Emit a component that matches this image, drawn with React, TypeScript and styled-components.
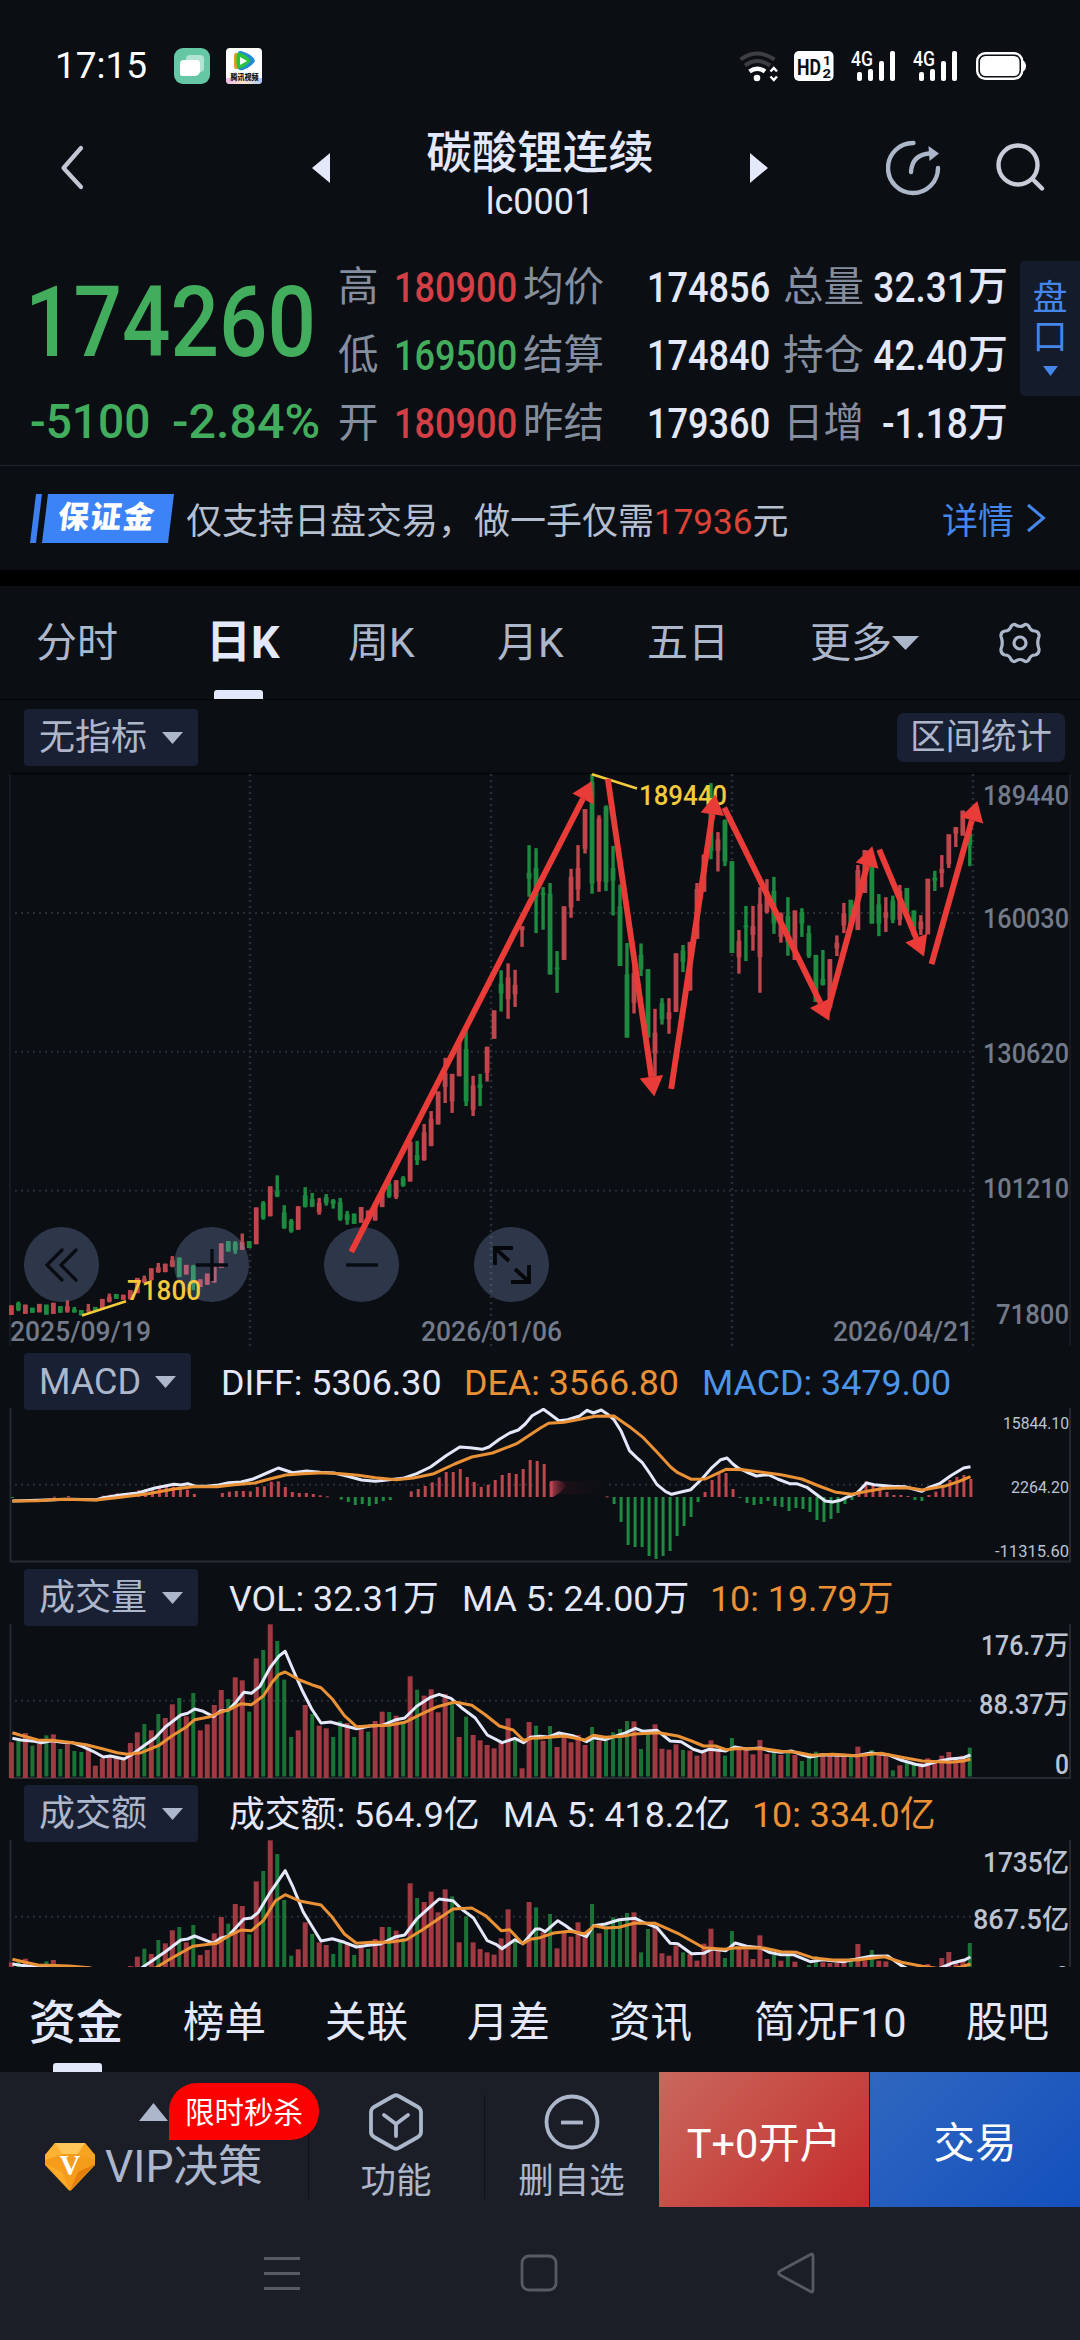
import React from "react";
import styled, { createGlobalStyle, css } from "styled-components";

const C = {
  bg: "#0b0f14",
  bar: "#1b1e26",
  chip: "#192033",
  text: "#e4e8fb",
  soft: "#adb7cc",
  label: "#858e9e",
  axis: "#737a89",
  up: "#bf464d",
  down: "#1d8a40",
  green: "#42ad5d",
  red: "#d33f44",
  orange: "#ea9136",
  blue: "#4486e9",
  yellow: "#f3ca3c",
  arrow: "#e93b38",
  grid: "#292d34",
};
const FONT = `Roboto, "Noto Sans CJK SC", sans-serif`;

const Global = createGlobalStyle`
  html, body { margin: 0; background: ${C.bar}; }
  * { box-sizing: border-box; }
  body { font-family: ${FONT}; color: ${C.text}; -webkit-font-smoothing: antialiased; }
  svg { display: block; flex: none; }
`;

/* ---------- layout pieces ---------- */

const Screen = styled.main`
  width: 1080px;
  height: 2340px;
  overflow: hidden;
  display: flex;
  flex-direction: column;
  background: ${C.bg};
`;

const StatusBar = styled.div`
  height: 96px;
  padding: 36px 54px 0 55px;
  display: flex;
  justify-content: space-between;
`;
const StatusGroup = styled.div`
  height: 60px;
  display: flex;
  align-items: center;
`;
const Clock = styled.span`
  width: 119px;
  font-size: 37px;
  line-height: 60px;
  letter-spacing: 0;
  color: #fff;
`;
const AppIcons = styled.div`
  display: flex;
  gap: 16px;
`;

const Header = styled.header`
  height: 144px;
  padding: 0 36px 0 56px;
  display: grid;
  grid-template-columns: 254px 20px 420px 20px 116px 56px 54px 49px;
  align-items: center;
`;
const Titles = styled.div`
  display: flex;
  flex-direction: column;
  align-items: center;
  padding-top: 17px;
`;
const Title = styled.h1`
  margin: 0;
  font-size: 45.5px;
  font-weight: 500;
  line-height: 52px;
`;
const Code = styled.span`
  font-size: 36px;
  line-height: 45px;
`;

const Quote = styled.section`
  height: 225px;
  display: grid;
  grid-template-columns: 338px 682px 60px;
`;
const Price = styled.div`
  padding: 32px 0 0 25px;
`;
const Squeeze = styled.span<{ $k: number; $right?: boolean }>`
  display: inline-block;
  white-space: nowrap;
  transform: scaleX(${(p) => p.$k});
  transform-origin: ${(p) => (p.$right ? "right" : "left")} center;
`;
const Last = styled.div`
  height: 100px;
  font-size: 99px;
  line-height: 100px;
  font-weight: 500;
  color: ${C.green};
`;
const Change = styled.div`
  height: 56px;
  margin: 22px 0 0 5px;
  display: grid;
  grid-template-columns: 142px 160px;
  font-size: 47.5px;
  line-height: 56px;
  font-weight: 500;
  color: ${C.green};
`;
const Stats = styled.div`
  display: grid;
  grid-template-columns: 56px 129px 124px 136px 88px 137px;
  grid-template-rows: repeat(3, 68px);
  align-items: center;
  padding-top: 13px;
`;
const StatLabel = styled.span`
  font-size: 40.5px;
  line-height: 68px;
  color: ${C.label};
  white-space: nowrap;
`;
const StatValue = styled.span<{ $color?: string; $right?: boolean }>`
  font-size: 43px;
  line-height: 68px;
  font-weight: 500;
  white-space: nowrap;
  color: ${(p) => p.$color ?? C.text};
  display: flex;
  justify-content: ${(p) => (p.$right ? "flex-end" : "flex-start")};
`;
const Unit = styled.span`
  font-size: 40px;
`;
const BookTab = styled.button`
  height: 135px;
  margin-top: 21px;
  padding: 18px 0 0;
  border: 0;
  border-radius: 5px 0 0 5px;
  background: #141b2b;
  color: ${C.blue};
  font-family: ${FONT};
  font-size: 35px;
  line-height: 39px;
  display: flex;
  flex-direction: column;
  align-items: center;
`;

const Notice = styled.section`
  height: 105px;
  border-top: 1px solid #22262e;
  padding: 0 34px 0 30px;
  display: flex;
  align-items: center;
  font-size: 36px;
  color: #b6bfd0;
`;
const Ribbon = styled.div`
  width: 144px;
  height: 49px;
  display: flex;
  gap: 6px;
  padding: 0 3px;
  transform: skewX(-7deg);
`;
const RibbonBar = styled.span`
  width: 6px;
  background: #3b7ff0;
`;
const RibbonBody = styled.span`
  flex: 1;
  background: #3b83f7;
  color: #fff;
  font-size: 31px;
  font-weight: 900;
  line-height: 47px;
  padding-left: 13px;
  letter-spacing: 1.5px;
`;
const NoticeText = styled.span`
  margin-left: 12px;
  flex: 1;
  white-space: nowrap;
`;
const Accent = styled.span`
  color: #dc4338;
  font-size: 35px;
`;
const Detail = styled.a`
  color: ${C.blue};
  display: flex;
  align-items: center;
  gap: 12px;
`;

const Band = styled.div`
  height: 16px;
  background: #000;
`;

const Periods = styled.nav`
  height: 114px;
  padding-left: 36px;
  border-bottom: 1px solid #010203;
  display: grid;
  grid-template-columns: 170px 142px 149px 150px 163px 188px 60px;
`;
const Period = styled.div<{ $active?: boolean }>`
  display: flex;
  flex-direction: column;
  justify-content: flex-end;
  font-size: 41px;
  line-height: 56px;
  color: ${C.soft};
  ${(p) =>
    p.$active &&
    css`
      color: ${C.text};
      font-size: 45px;
      font-weight: 700;
    `}
`;
const PeriodText = styled.span<{ $pad: number }>`
  display: flex;
  align-items: center;
  white-space: nowrap;
  height: 56px;
  margin-bottom: ${(p) => p.$pad}px;
`;
const Underline = styled.i<{ $left: number }>`
  width: 49px;
  height: 9px;
  margin-left: ${(p) => p.$left}px;
  border-radius: 3px 3px 0 0;
  background: ${C.text};
`;

const ToolRow = styled.div`
  height: 73px;
  padding: 9px 15px 8px 24px;
  display: flex;
  align-items: center;
  justify-content: space-between;
`;
const Chip = styled.button<{ $w: number; $h?: number }>`
  width: ${(p) => p.$w}px;
  height: ${(p) => p.$h ?? 57}px;
  flex: none;
  padding: 1px 15px 0 15px;
  border: 0;
  border-radius: 4px;
  background: ${C.chip};
  color: ${C.soft};
  font-family: ${FONT};
  font-size: 36px;
  line-height: 1;
  white-space: nowrap;
  display: flex;
  align-items: center;
  justify-content: space-between;
`;
const Range = styled(Chip)`
  font-size: 35.5px;
  border-radius: 7px;
  justify-content: center;
`;

const LegendRow = styled.div`
  height: 63px;
  padding: 6px 0 0 24px;
  display: flex;
  align-items: center;
  font-size: 35.8px;
`;
const Legend = styled.span<{ $w: number; $color?: string; $ml?: number }>`
  width: ${(p) => p.$w}px;
  height: 57px;
  line-height: 60px;
  margin-left: ${(p) => p.$ml ?? 0}px;
  white-space: nowrap;
  color: ${(p) => p.$color ?? C.text};
`;
const Pane = styled.div`
  margin-top: -2px;
`;
const PriceArea = styled.div`
  position: relative;
  height: 574px;
`;
const Layer = styled.div`
  position: absolute;
  inset: 0;
  pointer-events: none;
`;
const Controls = styled.div`
  position: absolute;
  left: 24px;
  top: 454px;
  display: flex;
  gap: 75px;
`;
const RoundButton = styled.button`
  width: 75px;
  height: 75px;
  padding: 0;
  border: 0;
  border-radius: 50%;
  background: rgba(140, 165, 220, 0.27);
  display: grid;
  place-items: center;
`;

const Sections = styled.nav`
  height: 105px;
  padding-left: 29px;
  display: grid;
  grid-template-columns: 154px 142px 142px 142px 145px 212px 90px;
  font-size: 41.5px;
`;
const Section = styled.div<{ $active?: boolean }>`
  display: flex;
  flex-direction: column;
  padding-top: 28px;
  white-space: nowrap;
  line-height: 56px;
  ${(p) =>
    p.$active &&
    css`
      font-size: 47px;
      font-weight: 500;
    `}
`;
const SectionMark = styled(Underline)`
  margin-top: 12px;
`;

const ActionBar = styled.div`
  height: 135px;
  background: ${C.bar};
  display: grid;
  grid-template-columns: 308px 176px 175px 210px 1px 210px;
`;
const Vip = styled.div`
  position: relative;
  padding: 70px 0 0 44px;
  display: flex;
  align-items: flex-start;
  gap: 9px;
  font-size: 44.5px;
  line-height: 51px;
  color: ${C.soft};
  white-space: nowrap;
`;
const Promo = styled.div`
  position: absolute;
  left: 139px;
  top: 11px;
  display: flex;
  align-items: center;
`;
const PromoTag = styled.span`
  height: 57px;
  width: 150px;
  margin-left: 1px;
  border-radius: 28px 28px 28px 0;
  background: #fb0200;
  color: #fff;
  font-size: 29.5px;
  line-height: 60px;
  text-align: center;
`;
const Action = styled.div`
  padding-top: 21px;
  display: flex;
  flex-direction: column;
  align-items: center;
  gap: 5px;
  font-size: 35.5px;
  line-height: 50px;
  color: ${C.soft};
  background: linear-gradient(#0e1116, #0e1116) 0 23px / 1px 104px no-repeat;
`;
const Trade = styled.button<{ $from: string; $to: string }>`
  border: 0;
  padding: 0;
  background: linear-gradient(135deg, ${(p) => p.$from}, ${(p) => p.$to});
  color: #fff;
  font-family: ${FONT};
  font-size: 41.5px;
`;
const SystemNav = styled.div`
  flex: 1;
  padding: 44px 264px 0 262px;
  background: ${C.bar};
  display: flex;
  align-items: flex-start;
  justify-content: space-between;
`;

/* ---------- small drawings ---------- */

const Caret = ({ w = 21, h = 12, color = C.soft }: { w?: number; h?: number; color?: string }) => (
  <svg width={w} height={h} viewBox="0 0 10 10" preserveAspectRatio="none">
    <path d="M0 0H10L5 10Z" fill={color} />
  </svg>
);

const FilesIcon = () => (
  <svg width="36" height="36" viewBox="0 0 36 36">
    <rect width="36" height="36" rx="9" fill="#66c7a5" />
    <rect x="12" y="7" width="18" height="17" rx="4" fill="#b3e3d2" />
    <path d="M10 12h13a3 3 0 0 1 3 3v8a5 5 0 0 1-5 5H8a2 2 0 0 1-2-2V16a4 4 0 0 1 4-4z" fill="#fff" />
  </svg>
);

const VideoIcon = () => (
  <svg width="36" height="36" viewBox="0 0 36 36">
    <defs>
      <linearGradient id="vbg" x1="0" x2="1">
        <stop offset="0" stopColor="#f0b8ee" />
        <stop offset=".5" stopColor="#fbe6c8" />
        <stop offset="1" stopColor="#a9c9fb" />
      </linearGradient>
    </defs>
    <rect width="36" height="36" rx="4" fill="#fff" />
    <path d="M0 30H36V32a4 4 0 0 1-4 4H4a4 4 0 0 1-4-4Z" fill="url(#vbg)" />
    <path d="M8 7q0-2 2-2h3v16h-3q-2 0-2-2z" fill="#e89a24" />
    <path d="M12 4.500q1-2 4-1.200 8 2.500 12 7.200 1.500 2 0 4-4 5-11 7.500-4 1-5-1.500-2-8 0-16z" fill="#2189d8" />
    <path d="M11 6q1-2 3.500-1.200 6 2.200 9.500 6.200 1 1.500 0 3-3.500 4-9 6.200-3 1-4-1.200-1.500-6.500 0-13z" fill="#28c440" />
    <path d="M14 9l7 4-7 4z" fill="#fff" />
    <text x="4.500" y="31.500" fontSize="7.500" fontWeight="900" fill="#1a1420" textLength="28" lengthAdjust="spacingAndGlyphs">
      腾讯视频
    </text>
  </svg>
);

const Signal = ({ x }: { x: number }) => (
  <g transform={`translate(${x} 0)`} fill="#fff">
    <text x="0" y="14.500" fontSize="19.500" fontWeight="500" textLength="22" lengthAdjust="spacingAndGlyphs">4G</text>
    <rect x="6" y="21" width="5" height="9" rx="2" />
    <rect x="17" y="18" width="5" height="12" rx="2" />
    <rect x="28" y="10" width="5" height="20" rx="2" />
    <rect x="39" y="0" width="5" height="30" rx="2" />
  </g>
);

const StatusIcons = () => (
  <svg width="288" height="42" viewBox="738 -6 288 42" fontFamily={FONT}>
    <g fill="none" strokeWidth="4">
      <path d="M740.500 8.500Q757 -3.500 774.500 8.500" stroke="#3c3e42" />
      <path d="M745 14.500Q757 5.500 770 14.500" stroke="#3c3e42" />
      <path d="M749.500 20.500Q757.500 15 765 20.500" stroke="#fff" strokeWidth="4.500" />
      <path d="M770.500 20.500L773.800 17L777 20.500M770.500 25.500L773.800 29L777 25.500" stroke="#fff" strokeWidth="2.500" />
    </g>
    <circle cx="757" cy="27" r="3.300" fill="#fff" />
    <rect x="794" width="39.500" height="30" rx="5" fill="#fff" />
    <g fill="#0b0f14" fontWeight="700">
      <text x="797" y="23.500" fontSize="22.500" textLength="24" lengthAdjust="spacingAndGlyphs">HD</text>
      <text x="823" y="13.500" fontSize="12.500" textLength="8" lengthAdjust="spacingAndGlyphs">1</text>
      <text x="822.500" y="26.500" fontSize="12.500" textLength="8.500" lengthAdjust="spacingAndGlyphs">2</text>
    </g>
    <Signal x={851} />
    <Signal x={913} />
    <rect x="977.200" y="2.200" width="45" height="25.500" rx="8" fill="none" stroke="#fff" strokeWidth="2.400" />
    <rect x="980" y="5" width="39.500" height="20" rx="5.500" fill="#fff" />
    <path d="M1023 9.500q3 1.500 3 5.500t-3 5.500z" fill="#fff" />
  </svg>
);

/* ---------- chart data ---------- */

const STEP = 6.9956;
const cx = (i: number) => 11.4 + STEP * i;
const UNIT = 2.9037;

type Candle = [string, number, number, number?, number?];
// direction, high, low, body top, body bottom (missing body = full range)
const CANDLES: Candle[] = [
  ["r", 1428, 1453], ["g", 1418, 1443, 1422, 1440], ["r", 1426, 1450], ["g", 1434, 1447], ["r", 1424, 1446], ["g", 1426, 1452],
  ["r", 1421, 1450], ["g", 1430, 1447], ["r", 1415, 1447, 1430, 1444], ["g", 1432, 1447, 1438, 1446], ["g", 1440, 1454], ["r", 1424, 1446, 1439, 1443],
  ["g", 1432, 1442], ["r", 1411, 1437], ["r", 1397, 1420, 1405, 1418], ["g", 1398, 1411], ["r", 1400, 1413], ["r", 1388, 1412],
  ["r", 1356, 1396], ["r", 1350, 1370, 1358, 1368], ["r", 1331, 1362], ["r", 1317, 1343, 1328, 1341], ["r", 1319, 1341], ["r", 1299, 1328, 1310, 1326],
  ["g", 1303, 1354], ["r", 1322, 1347], ["g", 1322, 1388, 1325, 1372], ["r", 1360, 1380], ["r", 1345, 1374], ["r", 1325, 1368],
  ["r", 1266, 1330], ["g", 1260, 1287], ["g", 1260, 1293, 1264, 1284], ["r", 1240, 1283, 1262, 1282], ["g", 1260, 1278], ["r", 1172, 1268],
  ["g", 1155, 1204, 1160, 1200], ["r", 1117, 1195], ["g", 1088, 1145, 1130, 1143], ["g", 1166, 1228, 1185, 1226], ["g", 1202, 1238, 1207, 1234], ["r", 1169, 1230],
  ["g", 1119, 1172, 1140, 1170], ["g", 1134, 1171, 1150, 1170], ["r", 1147, 1191, 1160, 1185], ["g", 1137, 1167, 1145, 1160], ["g", 1150, 1175, 1153, 1162], ["g", 1147, 1207, 1158, 1203],
  ["g", 1181, 1217, 1190, 1205], ["g", 1188, 1215], ["r", 1171, 1212], ["r", 1180, 1200], ["r", 1160, 1206], ["r", 1130, 1171],
  ["g", 1100, 1147, 1110, 1143], ["r", 1101, 1150, 1101, 1145], ["g", 1090, 1118, 1095, 1115], ["r", 1000, 1104], ["g", 998, 1061, 1035, 1048], ["r", 954, 1050, 975, 1048],
  ["r", 920, 1012, 940, 1011], ["r", 869, 955], ["r", 781, 899, 820, 857], ["r", 823, 925, 823, 895], ["r", 742, 829], ["g", 705, 907, 758, 895],
  ["r", 828, 933, 853, 917], ["g", 823, 907, 850, 860], ["r", 752, 843, 752, 820], ["r", 657, 731], ["g", 552, 660, 587, 613], ["r", 534, 679, 571, 628],
  ["r", 551, 648, 590, 615], ["r", 437, 491, 437, 447], ["g", 225, 360, 297, 313], ["g", 233, 455, 285, 360],
  ["g", 335, 446, 350, 355], ["g", 324, 563, 352, 563], ["g", 502, 611, 545, 550], ["r", 385, 525], ["r", 287, 415, 308, 388], ["r", 225, 371, 285, 341],
  ["r", 131, 247, 131, 235], ["g", 39, 352, 60, 325], ["r", 147, 347, 155, 320], ["g", 121, 345, 125, 322], ["g", 227, 409, 285, 318], ["g", 328, 541, 385, 541],
  ["g", 481, 728, 563, 728], ["r", 530, 665, 560, 638], ["g", 482, 567, 512, 550], ["g", 549, 728], ["r", 653, 830, 715, 770], ["g", 625, 694, 638, 680],
  ["r", 625, 718, 662, 680], ["r", 508, 661], ["g", 486, 557, 500, 530], ["r", 478, 605], ["r", 324, 470, 340, 470], ["r", 250, 347],
  ["g", 63, 262, 95, 240], ["r", 191, 294, 210, 240], ["g", 158, 280, 160, 268], ["g", 267, 507], ["r", 447, 561, 475, 518], ["g", 384, 528, 435, 440],
  ["r", 384, 501, 437, 460], ["r", 335, 611, 378, 518], ["r", 314, 404, 345, 400], ["g", 308, 457, 345, 430], ["r", 401, 480, 405, 465], ["g", 361, 514, 410, 480],
  ["r", 396, 525], ["g", 390, 465, 400, 430], ["g", 435, 520, 455, 515], ["g", 512, 635], ["g", 499, 592, 575, 590], ["r", 523, 650],
  ["r", 461, 515, 480, 495], ["r", 376, 455, 403, 435], ["g", 368, 440], ["r", 277, 447, 290, 447], ["r", 238, 350], ["g", 270, 430, 280, 430],
  ["g", 353, 463, 380, 430], ["r", 361, 452, 400, 415], ["g", 357, 429, 370, 420], ["r", 329, 435, 345, 420], ["g", 337, 400], ["g", 396, 460],
  ["r", 408, 460, 425, 445], ["r", 313, 458], ["g", 292, 345, 310, 318], ["r", 251, 335, 287, 298], ["r", 197, 285, 197, 275], ["r", 178, 230, 178, 195],
  ["r", 135, 200], ["g", 190, 280, 195, 225],
];

const VOLUME = [
  430, 426, 402, 440, 434, 409, 406, 450, 430, 456, 459, 445, 500, 478, 470, 472, 476, 432, 400, 375, 394, 345, 357, 316, 297, 352, 282, 394, 376, 318,
  273, 300, 235, 244, 338, 178, 153, 76, 126, 242, 414, 394, 318, 345, 380, 388, 414, 366, 372, 414, 386, 398, 366, 338, 339, 350, 372, 232, 272, 290,
  271, 340, 285, 312, 414, 353, 408, 424, 438, 448, 430, 358, 418, 508, 369, 380, 425, 381, 444, 412, 430, 408, 438, 384, 425, 425, 400, 390, 366, 367,
  450, 400, 376, 449, 452, 436, 453, 455, 470, 460, 424, 455, 470, 417, 450, 452, 466, 423, 465, 455, 468, 458, 468, 486, 474, 458, 470, 468, 470, 470,
  468, 443, 470, 453, 466, 466, 514, 499, 490, 494, 492, 478, 488, 470, 459, 478, 470, 446,
];
const TURNOVER = [
  1090, 1088, 1079, 1100, 1096, 1087, 1083, 1106, 1098, 1110, 1110, 1108, 1150, 1130, 1125, 1125, 1130, 1101, 1073, 1049, 1065, 1023, 1033, 994, 984, 1030, 978, 1068, 1053, 1003,
  954, 974, 915, 921, 1006, 847, 816, 724, 765, 903, 1070, 1051, 970, 1005, 1030, 1038, 1065, 1027, 1030, 1068, 1040, 1050, 1020, 984, 984, 995, 1018, 853, 897, 909,
  878, 940, 871, 892, 1030, 952, 1030, 1050, 1060, 1067, 1018, 931, 1020, 1150, 909, 925, 1000, 945, 1048, 1000, 1013, 970, 1015, 915, 1003, 980, 955, 960, 942, 940,
  1060, 990, 980, 1063, 1070, 1040, 1060, 1065, 1085, 1034, 989, 1050, 1077, 996, 1050, 1052, 1080, 1009, 1080, 1068, 1085, 1070, 1088, 1110, 1098, 1072, 1090, 1092, 1092, 1090,
  1077, 1035, 1085, 1053, 1085, 1087, 1150, 1140, 1120, 1120, 1115, 1095, 1110, 1077, 1059, 1090, 1080, 1032,
];
// colours of the volume and turnover bars follow the close-to-close direction
const DOWN_BARS = new Set([
  1, 3, 5, 7, 9, 10, 19, 21, 24, 26, 31, 34, 36, 38, 39, 40, 43, 46, 47, 49, 51, 54, 56, 58, 63, 65, 72, 75,
  77, 83, 85, 86, 87, 88, 90, 91, 96, 102, 103, 109, 111, 113, 114, 115, 120, 123, 126, 128, 129, 137,
]);

// MACD histogram tips, keyed by the first bar of each run
const MACD_RUNS: [number, number[]][] = [
  [0, [476]], [6, [473]], [8, [471]],
  [13, [470, 467, 463, 462, 460, 454, 451, 447, 444, 444, 443, 446, 452, 465]],
  [30, [462, 458, 456, 456, 457, 444, 442, 428, 427, 444, 459, 462, 462, 465, 469, 472]],
  [47, [482, 489, 498, 495, 501, 495, 486, 483]],
  [57, [457, 450, 441, 430, 415, 399, 399, 390, 414, 429, 444, 437, 423, 408, 402, 405, 390, 363, 366, 375, 427]],
  [85, [472, 495, 549, 618, 624, 624, 651, 660, 651, 636, 591, 561, 534, 489, 459, 423, 404, 402, 450, 477, 492, 498, 495, 486, 501, 504, 516, 507, 510, 519, 543, 549, 540, 522, 495, 483, 453, 427, 441, 444, 459, 468, 468, 471, 483, 486, 468, 458, 438, 423, 414, 408, 420]],
];

const DIFF = "36,486 110,484 200,481 280,482 300,476 350,468 400,462 450,447 505,436 525,438 545,434 565,441 600,442 635,438 665,431 700,429 735,420 775,402 808,387 850,401 890,396 930,400 970,402 1010,412 1050,423 1090,427 1130,422 1170,418 1210,404 1250,384 1295,350 1335,324 1365,326 1400,331 1420,324 1450,301 1480,282 1505,273 1525,255 1545,230 1568,217 1578,211 1593,222 1623,245 1648,242 1683,231 1705,214 1723,222 1746,213 1763,225 1783,242 1803,275 1828,335 1848,355 1865,371 1888,405 1908,437 1933,458 1950,466 1968,461 2006,452 2038,420 2068,385 2093,362 2111,357 2128,375 2143,387 2168,399 2196,411 2218,408 2233,408 2258,420 2293,434 2313,434 2343,445 2368,464 2396,486 2418,489 2440,484 2458,475 2488,463 2516,432 2538,437 2588,442 2628,443 2676,457 2698,445 2728,434 2763,409 2798,387 2818,383";
const DEA = "36,486 110,485 180,481 280,483 350,475 430,464 505,450 560,443 630,443 680,437 740,432 780,421 830,408 880,404 940,401 990,404 1040,409 1090,416 1150,422 1200,417 1260,404 1320,375 1370,354 1430,342 1500,314 1568,268 1593,253 1638,250 1688,240 1728,232 1783,231 1828,263 1868,296 1908,340 1948,385 1968,401 2008,421 2048,420 2108,391 2158,392 2208,399 2268,407 2328,420 2378,441 2428,460 2473,466 2518,457 2568,448 2638,446 2678,453 2748,440 2783,428 2818,413";
const VOL5 = "36,418 60,423 100,427 120,431 150,425 180,430 210,431 240,443 270,457 300,474 320,471 360,480 385,466 420,439 450,417 480,384 525,348 545,343 565,330 590,337 620,353 640,336 662,334 685,310 708,280 730,283 755,262 785,205 810,171 828,157 850,210 880,280 905,330 932,372 960,369 1000,380 1035,389 1075,381 1110,379 1150,362 1175,357 1210,322 1250,295 1275,286 1310,298 1340,326 1380,357 1415,408 1458,431 1495,418 1520,431 1540,415 1568,412 1593,414 1623,402 1663,410 1703,428 1723,416 1758,422 1783,413 1818,401 1845,388 1868,397 1908,394 1946,426 1978,428 2013,451 2038,459 2058,451 2108,456 2133,444 2168,450 2208,447 2233,455 2268,460 2298,456 2328,467 2353,474 2388,467 2438,469 2488,470 2528,462 2578,467 2618,484 2658,496 2680,500 2718,488 2758,480 2798,476 2818,468";
const VOL10 = "36,401 60,409 110,423 150,424 200,430 250,437 300,450 340,461 370,466 410,461 460,440 500,410 540,385 565,362 610,353 640,340 670,330 700,314 730,317 765,290 790,250 810,226 828,219 870,243 905,257 932,266 965,300 1000,350 1035,383 1080,380 1130,379 1175,370 1220,347 1270,323 1320,309 1370,319 1410,348 1450,381 1490,393 1520,424 1545,418 1568,417 1638,411 1698,423 1723,409 1758,415 1808,412 1843,405 1913,401 1968,411 2008,426 2043,441 2078,441 2108,452 2138,449 2218,449 2268,457 2313,460 2358,469 2418,466 2488,470 2558,463 2618,475 2678,486 2758,490 2798,486 2818,480";
const AMT5 = "36,1095 60,1099 100,1103 150,1101 200,1103 270,1110 360,1150 412,1106 440,1087 480,1058 525,1023 545,1020 565,1011 620,1033 640,1018 662,1012 708,960 730,957 750,940 785,880 828,815 850,862 880,938 932,1026 965,1019 1000,1030 1035,1044 1075,1038 1105,1035 1150,1013 1175,1008 1210,960 1240,932 1275,900 1315,905 1340,930 1375,957 1415,1025 1440,1036 1458,1049 1495,1022 1518,1034 1555,990 1568,990 1583,998 1620,965 1643,980 1663,996 1703,1013 1723,980 1758,975 1798,962 1845,958 1868,970 1908,986 1946,1033 1968,1034 2008,1064 2043,1063 2068,1050 2108,1055 2135,1032 2168,1042 2208,1046 2233,1060 2268,1067 2303,1067 2353,1088 2388,1082 2448,1088 2488,1080 2528,1072 2578,1071 2618,1100 2668,1125 2733,1106 2768,1091 2803,1082 2818,1074";
const AMT10 = "36,1081 70,1089 110,1098 200,1101 260,1106 370,1140 455,1105 490,1082 560,1042 630,1033 660,1013 700,993 730,995 765,964 800,905 828,887 870,906 932,918 965,955 1000,1005 1035,1033 1080,1030 1130,1030 1180,1022 1230,990 1315,930 1370,927 1410,950 1455,995 1480,992 1518,1034 1540,1021 1568,1016 1608,1002 1653,997 1698,1004 1726,980 1758,987 1798,985 1843,972 1903,973 1968,1003 2043,1046 2103,1051 2138,1046 2218,1047 2268,1058 2313,1060 2358,1076 2418,1083 2488,1083 2568,1073 2618,1090 2678,1102 2748,1112 2793,1103 2818,1095";

const ARROWS = [
  [351.3, 1252.9, 592, 782],
  [607.8, 779.9, 654.3, 1097.5],
  [671.2, 1089.9, 715.3, 795.5],
  [724.2, 808.6, 829.3, 1021.8],
  [827.5, 1012.6, 872.3, 847.3],
  [879.2, 850.7, 924, 957.5],
  [931.5, 965.1, 977.3, 802],
];

/* ---------- charts ---------- */

const AxisText = ({ x, y, w, size = 28, color = C.axis, anchor = "end", weight = 500, children }: {
  x: number; y: number; w: number; size?: number; color?: string; anchor?: "start" | "end"; weight?: number; children: string;
}) => (
  <text x={x} y={y} fontSize={size} fontWeight={weight} fill={color} textAnchor={anchor} textLength={w} lengthAdjust="spacingAndGlyphs">
    {children}
  </text>
);

const line = (points: string, base: number) =>
  points
    .split(" ")
    .map((p) => {
      const [x, y] = p.split(",").map(Number);
      return `${(x / UNIT).toFixed(1)},${(base + y / 3).toFixed(1)}`;
    })
    .join(" ");

const Curve = ({ points, base, color }: { points: string; base: number; color: string }) => (
  <polyline points={line(points, base)} fill="none" stroke={color} strokeWidth="3" strokeLinejoin="round" />
);

const HDots = ({ y }: { y: number }) => (
  <line x1="15" x2="973" y1={y} y2={y} stroke={C.grid} strokeWidth="2" strokeDasharray="2 4" />
);

const py = (v: number) => 760 + v / 2.6133;

const PriceBase = () => (
  <svg width="1080" height="574" viewBox="0 774 1080 574" fontFamily={FONT}>
    <path d="M10 774.500H1070" stroke="#010203" strokeWidth="1.500" />
    <path d="M10 775V1347M1070 775V1347" stroke="#1b1f25" strokeWidth="1.500" />
    {[914, 1052.8, 1191.8].map((y) => <HDots key={y} y={y} />)}
    {[250, 491, 732, 973].map((x) => (
      <line key={x} x1={x} x2={x} y1="775" y2="1347" stroke={C.grid} strokeWidth="2.500" strokeDasharray="2 4" />
    ))}
    {CANDLES.map(([d, hi, lo, bt = hi, bb = lo], i) => (
      <g key={i} fill={d === "r" ? C.up : C.down}>
        <rect x={cx(i) - 1.7} y={py(hi)} width="3.400" height={py(lo) - py(hi)} />
        <rect x={cx(i) - 2.4} y={py(bt)} width="4.800" height={py(bb) - py(bt)} />
      </g>
    ))}
    {([["189440", 805.5, 86], ["160030", 929, 86], ["130620", 1064, 86], ["101210", 1198.5, 86], ["71800", 1324.5, 73]] as [string, number, number][]).map(
      ([t, y, w]) => <AxisText key={t} x={1069} y={y} w={w}>{t}</AxisText>
    )}
    <AxisText x={10} y={1341.5} w={141} anchor="start">2025/09/19</AxisText>
    <AxisText x={421} y={1341.5} w={141} anchor="start">2026/01/06</AxisText>
    <AxisText x={833} y={1341.5} w={140} anchor="start">2026/04/21</AxisText>
  </svg>
);

const Arrow = ({ from }: { from: number[] }) => {
  const [x1, y1, x2, y2] = from;
  const len = Math.hypot(x2 - x1, y2 - y1);
  const ux = (x2 - x1) / len;
  const uy = (y2 - y1) / len;
  const bx = x2 - ux * 20;
  const by = y2 - uy * 20;
  return (
    <g fill={C.arrow} stroke="none">
      <line x1={x1} y1={y1} x2={bx} y2={by} stroke={C.arrow} strokeWidth="5.900" />
      <polygon points={`${x2},${y2} ${bx - uy * 11.8},${by + ux * 11.8} ${bx + uy * 11.8},${by - ux * 11.8}`} />
    </g>
  );
};

const PriceMarks = () => (
  <svg width="1080" height="574" viewBox="0 774 1080 574" fontFamily={FONT}>
    <path d="M82 1316.500L126 1302.300M592 775.200L637 789.500" stroke={C.yellow} strokeWidth="2.500" />
    <AxisText x={639} y={805.5} w={88} color={C.yellow} anchor="start">189440</AxisText>
    <AxisText x={127} y={1301} w={74} color={C.yellow} anchor="start">71800</AxisText>
    {ARROWS.map((a, i) => <Arrow key={i} from={a} />)}
  </svg>
);

const Frame = ({ top, bottom }: { top: number; bottom: number }) => (
  <path d={`M10.500 ${top}V${bottom}H1070V${top}`} fill="none" stroke="#292c33" strokeWidth="1.800" />
);

const MacdPane = () => (
  <Pane>
    <svg width="1080" height="155" viewBox="0 1409 1080 155" fontFamily={FONT}>
      <defs>
        <linearGradient id="fade" x1="0" x2="1">
          <stop offset="0" stopColor="#c9485a" stopOpacity=".85" />
          <stop offset="1" stopColor="#5a1c26" stopOpacity=".3" />
        </linearGradient>
        <linearGradient id="trail" x1="0" x2="1">
          <stop offset="0" stopColor="#3a141c" stopOpacity=".5" />
          <stop offset="1" stopColor="#2a0f16" stopOpacity="0" />
        </linearGradient>
      </defs>
      <Frame top={1409} bottom={1562.5} />
      <HDots y={1485.7} />
      <rect x="553" y="1482" width="55" height="13" rx="6" fill={C.bg} />
      <rect x="553" y="1482" width="50" height="13" rx="6" fill="url(#trail)" />
      <path d="M551 1482Q563 1480 566 1487Q562 1493 553 1498H551Z" fill="url(#fade)" />
      {MACD_RUNS.flatMap(([s, vs]) =>
        vs.map((v, k) => {
          const y = 1340 + v / 3;
          return (
            <rect key={s + k} x={cx(s + k) - 0.4} width="3" y={Math.min(y, 1498)} height={Math.max(1, Math.abs(1498 - y))} fill={v < 474 ? C.up : C.down} />
          );
        })
      )}
      <Curve points={DIFF} base={1340} color={C.text} />
      <Curve points={DEA} base={1340} color={C.orange} />
      <AxisText x={1069} y={1430} w={66} size={16.5} weight={400} color="#bcc3d2">15844.10</AxisText>
      <AxisText x={1069} y={1494} w={58} size={16.5} weight={400} color="#bcc3d2">2264.20</AxisText>
      <AxisText x={1069} y={1558} w={74} size={16.5} weight={400} color="#bcc3d2">-11315.60</AxisText>
    </svg>
  </Pane>
);

const BarPane = ({ top, height, floor, mid, values, ma5, ma10, labels, open }: {
  top: number; height: number; floor: number; mid: number; values: number[]; ma5: string; ma10: string; labels: [string, number, number][]; open?: boolean;
}) => (
  <Pane>
    <svg width="1080" height={height} viewBox={`0 ${top} 1080 ${height}`} fontFamily={FONT} overflow={open ? "visible" : "hidden"}>
      <Frame top={top} bottom={floor} />
      <HDots y={mid} />
      {values.map((v, i) => {
        const y = 1600 + v / 3;
        const down = DOWN_BARS.has(i);
        return <rect key={i} x={cx(i) - (down ? 2 : 2.5)} y={y} width={down ? 4 : 5} height={Math.max(0, floor - (down ? 1.5 : 0) - y)} fill={down ? "#1b7136" : "#a03941"} />;
      })}
      <Curve points={ma5} base={1600} color={C.text} />
      <Curve points={ma10} base={1600} color={C.orange} />
      {labels.map(([t, y, w]) => <AxisText key={t} x={1069} y={y} w={w} size={27.5} color="#bcc3d2">{t}</AxisText>)}
    </svg>
  </Pane>
);

/* ---------- page ---------- */

const STATS: [string, string, string, string, string, string, string][] = [
  ["高", "180900", C.red, "均价", "174856", "总量", "32.31"],
  ["低", "169500", C.green, "结算", "174840", "持仓", "42.40"],
  ["开", "180900", C.red, "昨结", "179360", "日增", "-1.18"],
];

export default function App() {
  return (
    <Screen>
      <Global />
      <StatusBar>
        <StatusGroup>
          <Clock>17:15</Clock>
          <AppIcons><FilesIcon /><VideoIcon /></AppIcons>
        </StatusGroup>
        <StatusGroup><StatusIcons /></StatusGroup>
      </StatusBar>

      <Header>
        <svg width="30" height="48" viewBox="0 0 30 48">
          <path d="M25 4L7.500 24L25 43" fill="none" stroke="#c3c7d4" strokeWidth="4.200" strokeLinecap="round" strokeLinejoin="round" />
        </svg>
        <svg width="20" height="30" viewBox="0 0 20 30"><path d="M20 0V30L2 15Z" fill={C.text} /></svg>
        <Titles>
          <Title>碳酸锂连续</Title>
          <Code>lc0001</Code>
        </Titles>
        <svg width="20" height="30" viewBox="0 0 20 30"><path d="M0 0V30L18 15Z" fill={C.text} /></svg>
        <span />
        <svg width="56" height="56" viewBox="0 0 56 56" fill="none" stroke="#acb7ca" strokeWidth="4.400" strokeLinecap="round">
          <path d="M27.500 3A25 25 0 1 0 52 28" />
          <path d="M25 32Q26 15 43 13.500" />
          <path d="M42.500 6L53 13.500L43.500 21Z" fill="#acb7ca" stroke="none" />
        </svg>
        <span />
        <svg width="49" height="50" viewBox="0 0 49 50" fill="none" stroke="#c9cdd9" strokeWidth="4.400" strokeLinecap="round">
          <circle cx="22" cy="22" r="19.500" />
          <path d="M37 36.500L46 45.500" />
        </svg>
      </Header>

      <Quote>
        <Price>
          <Last><Squeeze $k={0.862}>174260</Squeeze></Last>
          <Change>
            <Squeeze $k={0.97}>-5100</Squeeze>
            <Squeeze $k={1.02}>-2.84%</Squeeze>
          </Change>
        </Price>
        <Stats>
          {STATS.map(([a, av, color, b, bv, c, cv]) => (
            <React.Fragment key={a}>
              <StatLabel>{a}</StatLabel>
              <StatValue $color={color}><Squeeze $k={0.84}>{av}</Squeeze></StatValue>
              <StatLabel>{b}</StatLabel>
              <StatValue><Squeeze $k={0.84}>{bv}</Squeeze></StatValue>
              <StatLabel>{c}</StatLabel>
              <StatValue $right><Squeeze $k={0.86} $right>{cv}</Squeeze><Unit>万</Unit></StatValue>
            </React.Fragment>
          ))}
        </Stats>
        <BookTab>
          <span>盘</span>
          <span>口</span>
          <svg width="15" height="20" viewBox="0 0 15 20"><path d="M0 9H15L7.500 19Z" fill={C.blue} /></svg>
        </BookTab>
      </Quote>

      <Notice>
        <Ribbon><RibbonBar /><RibbonBody>保证金</RibbonBody></Ribbon>
        <NoticeText>仅支持日盘交易，做一手仅需<Accent>17936</Accent>元</NoticeText>
        <Detail>
          详情
          <svg width="20" height="30" viewBox="0 0 20 30">
            <path d="M2 2L17.500 15L2 28" fill="none" stroke={C.blue} strokeWidth="3" />
          </svg>
        </Detail>
      </Notice>
      <Band />

      <Periods>
        <Period><PeriodText $pad={28}>分时</PeriodText></Period>
        <Period $active>
          <PeriodText $pad={19}>日K</PeriodText>
          <Underline $left={8} />
        </Period>
        <Period><PeriodText $pad={28}>周K</PeriodText></Period>
        <Period><PeriodText $pad={28}>月K</PeriodText></Period>
        <Period><PeriodText $pad={28}>五日</PeriodText></Period>
        <Period><PeriodText $pad={28}>更多<Caret w={27} h={14} /></PeriodText></Period>
        <Period>
          <PeriodText $pad={28}>
            <svg width="44" height="42" viewBox="0 0 44 42" fill="none" stroke={C.soft} strokeWidth="3.200" strokeLinejoin="round">
              <path d="M13 4.500Q15.500 1 18.500 3.500Q22 5.500 25.500 3.500Q28.500 1 31 4.500Q32.500 9 37 9Q41.500 10 41 14.500Q38.500 21 41 27Q41.500 32 37 33Q32.500 33 31 37.500Q28.500 41 25.500 38.500Q22 36.500 18.500 38.500Q15.500 41 13 37.500Q11.500 33 7 33Q2.500 32 3 27Q5.500 21 3 14.500Q2.500 10 7 9Q11.500 9 13 4.500Z" />
              <circle cx="22" cy="21" r="6" />
            </svg>
          </PeriodText>
        </Period>
      </Periods>

      <ToolRow>
        <Chip $w={174}>无指标<Caret /></Chip>
        <Range $w={168} $h={49}>区间统计</Range>
      </ToolRow>

      <PriceArea>
        <PriceBase />
        <Controls>
          <RoundButton>
            <svg width="34" height="34" viewBox="0 0 34 34" fill="none" stroke="#080b12" strokeWidth="3.200" strokeLinecap="round">
              <path d="M17 2L2 17L17 32M31 2L16 17L31 32" />
            </svg>
          </RoundButton>
          <RoundButton>
            <svg width="34" height="34" viewBox="0 0 34 34" stroke="#080b12" strokeWidth="3.400"><path d="M17 1V33M1 17H33" /></svg>
          </RoundButton>
          <RoundButton>
            <svg width="34" height="34" viewBox="0 0 34 34" stroke="#080b12" strokeWidth="3.400"><path d="M1 17H33" /></svg>
          </RoundButton>
          <RoundButton>
            <svg width="40" height="40" viewBox="0 0 40 40" fill="none" stroke="#05070b" strokeWidth="3.800">
              <path d="M3 20V3H21M4 4L17 16M37 20V37H19M36 36L23 24" />
            </svg>
          </RoundButton>
        </Controls>
        <Layer><PriceMarks /></Layer>
      </PriceArea>

      <LegendRow>
        <Chip $w={167}>MACD<Caret /></Chip>
        <Legend $ml={30} $w={243}>DIFF: 5306.30</Legend>
        <Legend $w={238} $color={C.orange}>DEA: 3566.80</Legend>
        <Legend $w={260} $color="#4d95ea">MACD: 3479.00</Legend>
      </LegendRow>
      <MacdPane />

      <LegendRow>
        <Chip $w={174}>成交量<Caret /></Chip>
        <Legend $ml={31} $w={233}>VOL: 32.31万</Legend>
        <Legend $w={248}>MA 5: 24.00万</Legend>
        <Legend $w={200} $color={C.orange}>10: 19.79万</Legend>
      </LegendRow>
      <BarPane
        open top={1625} height={155} floor={1779} mid={1701.7} values={VOLUME} ma5={VOL5} ma10={VOL10}
        labels={[["176.7万", 1656, 88], ["88.37万", 1715, 90], ["0", 1775, 14]]}
      />

      <LegendRow>
        <Chip $w={174}>成交额<Caret /></Chip>
        <Legend $ml={31} $w={274}>成交额: 564.9亿</Legend>
        <Legend $w={249}>MA 5: 418.2亿</Legend>
        <Legend $w={200} $color={C.orange}>10: 334.0亿</Legend>
      </LegendRow>
      <BarPane
        top={1841} height={127} floor={1995} mid={1917.7} values={TURNOVER} ma5={AMT5} ma10={AMT10}
        labels={[["1735亿", 1873, 86], ["867.5亿", 1930, 96], ["0", 1987, 14]]}
      />

      <Sections>
        <Section $active>资金<SectionMark $left={24} /></Section>
        <Section>榜单</Section>
        <Section>关联</Section>
        <Section>月差</Section>
        <Section>资讯</Section>
        <Section>简况F10</Section>
        <Section>股吧</Section>
      </Sections>

      <ActionBar>
        <Vip>
          <svg width="52" height="50" viewBox="0 0 52 50">
            <path d="M11 1H41L51 13V23L27 48.500H25L1 23V13Z" fill="#f59d1b" />
            <path d="M11 1H41L34 12H18Z" fill="#ffc65a" />
            <path d="M11 1L18 12L1 18V13Z" fill="#ffb233" />
            <path d="M41 1L34 12L51 18V13Z" fill="#f7a420" />
            <path d="M1 22L18 30L26 48.500Z" fill="#ffab28" />
            <path d="M51 22L34 30L26 48.500Z" fill="#e47f0c" />
            <text x="26" y="33" fontSize="29" fontWeight="700" fontFamily='"Liberation Serif", serif' textAnchor="middle" fill="#fff">V</text>
          </svg>
          VIP决策
          <Promo>
            <svg width="29" height="18" viewBox="0 0 29 18"><path d="M14.500 0L29 18H0Z" fill={C.soft} /></svg>
            <PromoTag>限时秒杀</PromoTag>
          </Promo>
        </Vip>
        <Action>
          <svg width="54" height="58" viewBox="0 0 54 58" fill="none" stroke={C.soft} strokeWidth="3.800" strokeLinejoin="round" strokeLinecap="round">
            <path d="M23.500 3.500Q27 1 30.500 3.500L49 14Q52 16 52 19V39Q52 42 49 44L30.500 54.500Q27 57 23.500 54.500L5 44Q2 42 2 39V19Q2 16 5 14Z" />
            <path d="M15 22L27 31L39 22M27 31V43" />
          </svg>
          功能
        </Action>
        <Action>
          <svg width="56" height="58" viewBox="0 0 56 58" fill="none" stroke={C.soft} strokeWidth="3.800">
            <circle cx="28" cy="29" r="25.500" />
            <path d="M17 29.500H39" />
          </svg>
          删自选
        </Action>
        <Trade $from="#c9685c" $to="#c42b2c">T+0开户</Trade>
        <span />
        <Trade $from="#2f67bf" $to="#1450bd">交易</Trade>
      </ActionBar>

      <SystemNav>
        <svg width="40" height="44" viewBox="0 0 40 44" stroke="#575a62" strokeWidth="2.800"><path d="M2 7.500H38M2 22.500H38M2 37.500H38" /></svg>
        <svg width="40" height="44" viewBox="0 0 40 44" fill="none" stroke="#575a62" strokeWidth="2.800"><rect x="3" y="5" width="34" height="34" rx="7" /></svg>
        <svg width="40" height="44" viewBox="0 0 40 44" fill="none" stroke="#575a62" strokeWidth="2.800" strokeLinejoin="round"><path d="M37 5V39Q37 42 34.500 40.500L4 24Q1 22 4 20L34.500 3.500Q37 2 37 5Z" /></svg>
      </SystemNav>
    </Screen>
  );
}
